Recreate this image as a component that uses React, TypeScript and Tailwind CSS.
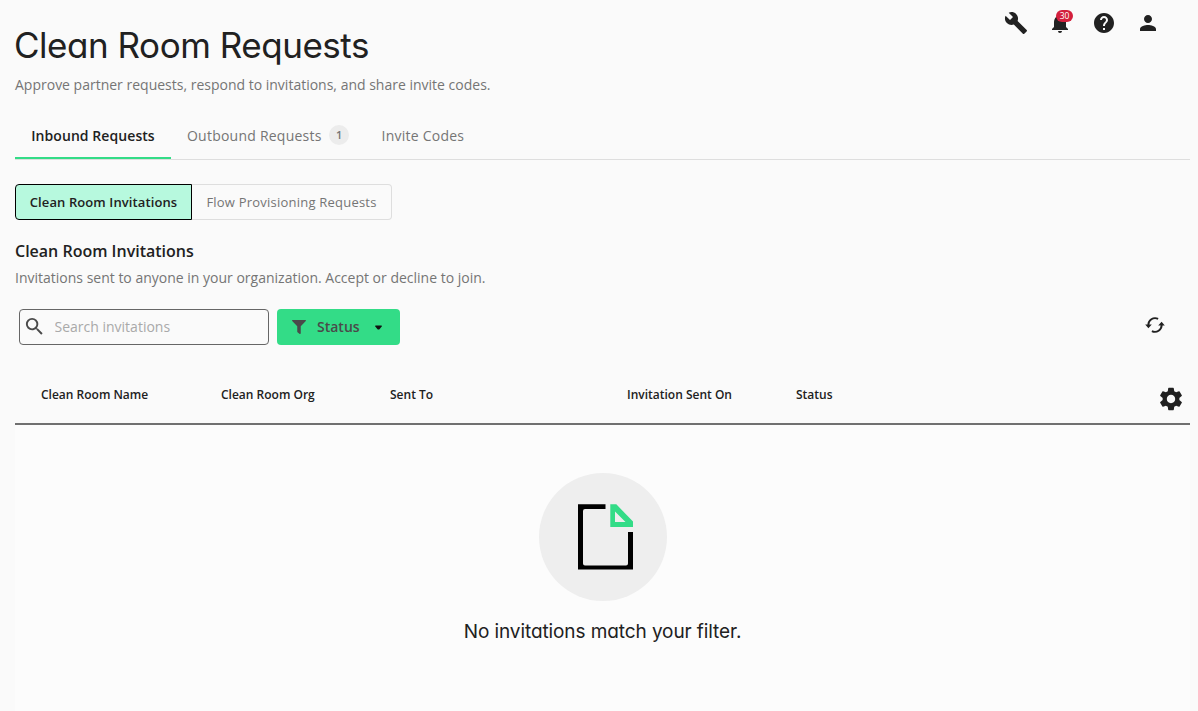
import React from "react";
import { MdBuild, MdNotifications, MdHelp, MdPerson, MdSearch, MdSettings } from "react-icons/md";
import { FaFilter } from "react-icons/fa";

const columns = [
  { label: "Clean Room Name", width: "w-[180px]" },
  { label: "Clean Room Org", width: "w-[169px]" },
  { label: "Sent To", width: "w-[237px]" },
  { label: "Invitation Sent On", width: "w-[169px]" },
  { label: "Status", width: "w-[169px]" },
];

function RefreshIcon() {
  return (
    <svg width="20" height="16" viewBox="0 0 20 16" fill="none">
      <path d="M3.4 8.3A6.7 6.7 0 0 1 13.1 1.9M16.6 7.7A6.7 6.7 0 0 1 6.9 14.1" stroke="#212121" strokeWidth="1.9" />
      <path d="M0.2 7.6h6.6L3.4 11.2zM13.2 8.4h6.6L16.6 4.8z" fill="#212121" />
    </svg>
  );
}

function Topbar() {
  return (
    <div className="flex gap-5 pt-[11px] pr-[30px] text-[#212121]">
      <MdBuild size={24} />
      <div className="relative">
        <MdNotifications size={24} />
        <span className="absolute left-[8px] -top-px flex h-[12px] w-[17px] items-center justify-center rounded-full bg-[#d31f3c] text-[8.5px] font-medium text-white">
          30
        </span>
      </div>
      <MdHelp size={24} />
      <MdPerson size={24} />
    </div>
  );
}

function EmptyState() {
  return (
    <div className="flex h-[286px] flex-col items-center bg-[#fcfcfc] pt-12">
      <div className="flex h-32 w-32 items-center justify-center rounded-full bg-[#eeeeee]">
        <svg width="128" height="128" viewBox="0 0 128 128" fill="none">
          <path d="M66.5 31.3H39v65.3h55V59h-5v31.5a2 2 0 0 1-2 2H46a2 2 0 0 1-2-2V38a2 2 0 0 1 2-2h20.5z" fill="#000" />
          <path d="M71.3 31.3h6L94 48.5V54H71.3zM76 38.5V49h10.5z" fill="#33dc87" fillRule="evenodd" />
        </svg>
      </div>
      <p className="mt-[17px] font-['Inter'] text-[19px] leading-7 tracking-[-0.09px] [font-feature-settings:'cv11']">
        No invitations match your filter.
      </p>
    </div>
  );
}

export default function App() {
  return (
    <div className="h-[711px] w-full overflow-hidden bg-[#fafafa] pl-[15px] pr-2 font-['Open_Sans',sans-serif] text-[#212121]">
      {/* header */}
      <div className="flex h-[94px] justify-between">
        <div className="pt-[21px]">
          <h1 className="-ml-px font-['Inter'] text-[35px] leading-[48px] tracking-[-0.47px] whitespace-nowrap [font-feature-settings:'cv11']">
            Clean Room Requests
          </h1>
          <p className="mt-[6px] text-[14px] leading-5 text-[#757575]">
            Approve partner requests, respond to invitations, and share invite codes.
          </p>
        </div>
        <Topbar />
      </div>

      {/* tabs */}
      <div className="mt-[18px] flex h-12 border-b border-[#dedede] text-[14px] font-medium tracking-[0.23px] text-[#757575]">
        <div className="flex h-[47px] w-[156px] items-center justify-center border-b-2 border-[#33dc87] pt-0.5 font-semibold tracking-[0.07px] text-[#212121]">
          Inbound Requests
        </div>
        <div className="flex h-[47px] items-center pl-4">
          Outbound Requests
          <span className="mb-px ml-[7.5px] flex h-5 w-5 items-center justify-center rounded-full bg-[#ececec] pt-px text-[11px] font-semibold tracking-normal">1</span>
        </div>
        <div className="flex h-[47px] items-center pl-[32.5px]">Invite Codes</div>
      </div>

      {/* toggle */}
      <div className="mt-6 flex h-9 text-[13px]">
        <button className="w-[177px] rounded-l-[4px] border border-black bg-[#b7f9de] pt-0.5 font-semibold tracking-[0.1px]">
          Clean Room Invitations
        </button>
        <button className="w-[200px] rounded-r-[4px] border border-l-0 border-[#dedede] pt-0.5 font-medium tracking-[0.22px] text-[#757575]">
          Flow Provisioning Requests
        </button>
      </div>

      <h2 className="mt-[19px] text-[16px] leading-6 font-semibold">Clean Room Invitations</h2>
      <p className="mt-[5px] text-[14px] leading-5 text-[#757575]">
        Invitations sent to anyone in your organization. Accept or decline to join.
      </p>

      {/* filters */}
      <div className="mt-[21px] flex h-9 items-center pl-1">
        <div className="flex h-9 w-[250px] items-center rounded-[4px] border border-[#666] pl-[3px]">
          <MdSearch size={23} className="mb-px shrink-0 text-[#4a4a4a]" />
          <input
            className="mb-0.5 ml-[8.5px] w-[190px] text-[14px] outline-none placeholder:text-[#a9a9a9]"
            placeholder="Search invitations"
          />
        </div>
        <button className="ml-2 flex h-9 w-[123px] items-center rounded-[4px] bg-[#33dc87] pl-[15px] text-[14px] font-semibold text-[#4a4a4a]">
          <FaFilter size={14} />
          <span className="mb-0.5 ml-[11px]">Status</span>
          <svg className="ml-[15px]" width="7" height="5" viewBox="0 0 7 5">
            <path d="M.3 .5h6.4v1L4.5 4.2q-1 .8-2 0L.3 1.5z" fill="#111" />
          </svg>
        </button>
        <div className="mr-[25.5px] mb-[5px] ml-auto">
          <RefreshIcon />
        </div>
      </div>

      {/* table */}
      <div className="mt-6 flex h-14 items-center border-b-2 border-[#707070] pl-[26px] text-[12px] font-semibold">
        {columns.map((col) => (
          <div key={col.label} className={`${col.width} shrink-0 pb-[3px]`}>
            {col.label}
          </div>
        ))}
        <MdSettings size={28} className="mr-[5px] mt-[5px] ml-auto" />
      </div>
      <EmptyState />
    </div>
  );
}
